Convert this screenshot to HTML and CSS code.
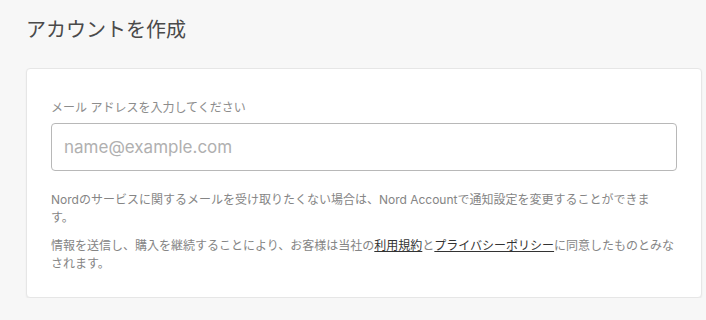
FILE: index.html
```html
<!DOCTYPE html>
<html lang="ja">
<head>
    <meta charset="UTF-8">
    <meta name="viewport" content="width=device-width, initial-scale=1.0">
    <title>アカウントを作成</title>
    <link rel="stylesheet" href="styles.css">
</head>
<body>
    <div class="page">
        <h1 class="page-title">アカウントを作成</h1>
        <form class="signup-card" onsubmit="return false">
            <label class="field-label" for="email">メール アドレスを入力してください</label>
            <input class="field-input" id="email" type="email" placeholder="name@example.com">
            <p class="note note-narrow">Nordのサービスに関するメールを受け取りたくない場合は、Nord Accountで通知設定を変更することができます。</p>
            <p class="note">情報を送信し、購入を継続することにより、お客様は当社の<a href="#">利用規約</a>と<a href="#">プライバシーポリシー</a>に同意したものとみなされます。</p>
        </form>
    </div>
</body>
</html>
```

FILE: styles.css
```css
body {
    margin: 0;
    background-color: #f7f7f7;
    font-family: "Inter", "Noto Sans CJK JP", sans-serif;
    color: #858585;
}
.page {
    padding: 16px 0 0 26px;
}
.page-title {
    margin: 0 0 24px;
    font-size: 20px;
    line-height: 28px;
    font-weight: normal;
    color: #4a4a4a;
}
.signup-card {
    width: 626px;
    padding: 30px 24px 24px;
    background-color: white;
    border: 1px solid #e6e6e6;
    border-radius: 4px;
    box-shadow: 0 1px 2px rgba(0,0,0,0.06);
}
.field-label {
    display: block;
    font-size: 12px;
    line-height: 18px;
    color: #8c8c8c;
    margin-bottom: 6px;
}
.field-input {
    display: block;
    box-sizing: border-box;
    width: 100%;
    height: 48px;
    padding: 0 12px;
    border: 1px solid #b8b8b8;
    border-radius: 4px;
    font-family: inherit;
    font-size: 17px;
    color: #333;
    outline: none;
}
.field-input::placeholder {
    color: #b0b0b0;
}
.note {
    margin: 0;
    font-size: 12px;
    line-height: 18px;
}
.note-narrow {
    padding-right: 24px;
}
.field-input + .note {
    margin-top: 20px;
}
.note + .note {
    margin-top: 10px;
}
.note a {
    color: #333;
    text-decoration: underline;
}
```
